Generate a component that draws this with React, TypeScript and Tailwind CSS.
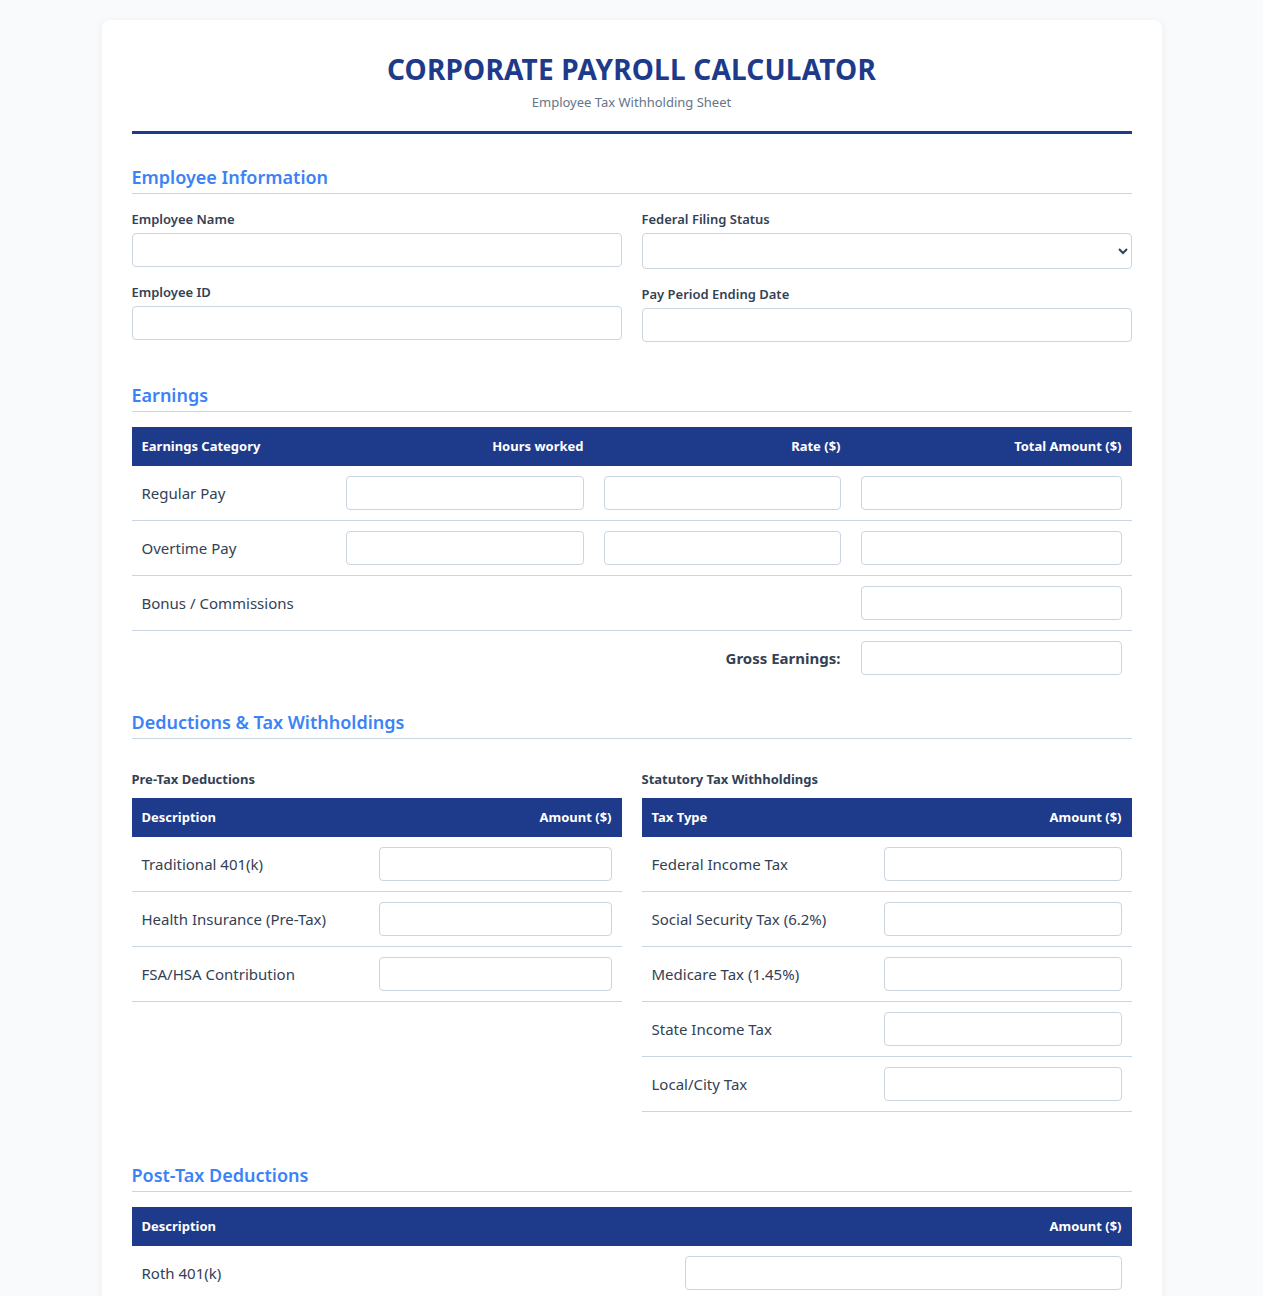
const inputClass =
  "block h-[34px] w-full rounded-[4px] border border-[#cbd5e1] bg-white px-2 text-[14px] text-[#334155] outline-none focus:border-[#3b82f6]";

const labelClass = "block text-[13px] leading-[18px] font-semibold text-[#334155]";

const thClass = "h-[39px] bg-[#1e3a8a] px-[10px] text-[13px] font-bold text-white";

const tdClass = "border-b border-[#cbd5e1] px-[10px] py-[10px] text-[15px] text-[#334155]";

const SectionTitle = ({ title, className }: { title: string; className: string }) => (
  <h2
    className={`border-b border-[#cbd5e1] pb-[5px] text-[18px] leading-[22px] font-semibold text-[#3b82f6] ${className}`}
  >
    {title}
  </h2>
);

const Field = ({ label, tall }: { label: string; tall?: boolean }) => (
  <div className="mb-4">
    <label className={labelClass}>{label}</label>
    {tall ? (
      <select className="mt-[5px] block h-[36px] w-full rounded-[4px] border border-[#cbd5e1] bg-white px-2 text-[14px] text-[#334155]">
        <option value=""></option>
        <option>Single</option>
        <option>Married Filing Jointly</option>
        <option>Head of Household</option>
      </select>
    ) : (
      <input className={`mt-[5px] ${inputClass}`} type="text" />
    )}
  </div>
);

const earnings = [
  { name: "Regular Pay", hours: true },
  { name: "Overtime Pay", hours: true },
  { name: "Bonus / Commissions", hours: false },
];

const preTax = ["Traditional 401(k)", "Health Insurance (Pre-Tax)", "FSA/HSA Contribution"];

const taxes = [
  "Federal Income Tax",
  "Social Security Tax (6.2%)",
  "Medicare Tax (1.45%)",
  "State Income Tax",
  "Local/City Tax",
];

const postTax = ["Roth 401(k)"];

const AmountTable = ({
  first,
  rows,
  descWidth,
  amountWidth,
}: {
  first: string;
  rows: string[];
  descWidth: string;
  amountWidth: string;
}) => (
  <table className="w-full table-fixed border-collapse">
    <colgroup>
      <col className={descWidth} />
      <col className={amountWidth} />
    </colgroup>
    <thead>
      <tr>
        <th className={`${thClass} text-left`}>{first}</th>
        <th className={`${thClass} text-right`}>Amount ($)</th>
      </tr>
    </thead>
    <tbody>
      {rows.map((row) => (
        <tr key={row}>
          <td className={tdClass}>{row}</td>
          <td className={tdClass}>
            <input className={inputClass} type="text" />
          </td>
        </tr>
      ))}
    </tbody>
  </table>
);

export default function App() {
  return (
    <div
      className="min-h-screen bg-[#f8fafc] pt-5 pb-10"
      style={{ fontFamily: '"Noto Sans", "Open Sans", sans-serif' }}
    >
      <div className="mx-auto w-[1060px] rounded-lg bg-white px-[30px] pt-[30px] pb-[40px] shadow-[0_2px_10px_rgba(15,23,42,0.06)]">
        <header className="border-b-[3px] border-[#1e3a8a] pb-5 text-center">
          <h1 className="text-[28px] leading-[38px] font-bold tracking-[0.2px] text-[#1e3a8a] uppercase">
            Corporate Payroll Calculator
          </h1>
          <p className="mt-[5px] text-[13px] leading-[18px] text-[#64748b]">
            Employee Tax Withholding Sheet
          </p>
        </header>

        <SectionTitle title="Employee Information" className="mt-[32px]" />
        <div className="mt-4 grid grid-cols-2 gap-x-5">
          <div>
            <Field label="Employee Name" />
            <Field label="Employee ID" />
          </div>
          <div>
            <Field label="Federal Filing Status" tall />
            <Field label="Pay Period Ending Date" />
          </div>
        </div>

        <SectionTitle title="Earnings" className="mt-[26px]" />
        <table className="mt-[15px] w-full table-fixed border-collapse">
          <colgroup>
            <col className="w-[204px]" />
            <col className="w-[258px]" />
            <col className="w-[257px]" />
            <col className="w-[281px]" />
          </colgroup>
          <thead>
            <tr>
              <th className={`${thClass} text-left`}>Earnings Category</th>
              <th className={`${thClass} text-right`}>Hours worked</th>
              <th className={`${thClass} text-right`}>Rate ($)</th>
              <th className={`${thClass} text-right`}>Total Amount ($)</th>
            </tr>
          </thead>
          <tbody>
            {earnings.map((row) => (
              <tr key={row.name}>
                <td className={tdClass}>{row.name}</td>
                <td className={tdClass}>
                  {row.hours ? <input className={inputClass} type="text" /> : null}
                </td>
                <td className={tdClass}>
                  {row.hours ? <input className={inputClass} type="text" /> : null}
                </td>
                <td className={tdClass}>
                  <input className={inputClass} type="text" />
                </td>
              </tr>
            ))}
            <tr>
              <td
                className="px-[10px] py-[10px] text-right text-[15px] font-bold text-[#334155]"
                colSpan={3}
              >
                Gross Earnings:
              </td>
              <td className="px-[10px] py-[10px]">
                <input className={inputClass} type="text" />
              </td>
            </tr>
          </tbody>
        </table>

        <SectionTitle title="Deductions & Tax Withholdings" className="mt-[26px]" />
        <div className="mt-[31px] grid grid-cols-2 gap-x-5">
          <div>
            <h3 className="text-[13px] leading-[18px] font-bold text-[#334155]">Pre-Tax Deductions</h3>
            <div className="mt-[10px]">
              <AmountTable
                first="Description"
                rows={preTax}
                descWidth="w-[237px]"
                amountWidth="w-[253px]"
              />
            </div>
          </div>
          <div>
            <h3 className="text-[13px] leading-[18px] font-bold text-[#334155]">
              Statutory Tax Withholdings
            </h3>
            <div className="mt-[10px]">
              <AmountTable
                first="Tax Type"
                rows={taxes}
                descWidth="w-[232px]"
                amountWidth="w-[258px]"
              />
            </div>
          </div>
        </div>

        <SectionTitle title="Post-Tax Deductions" className="mt-[52px]" />
        <div className="mt-[15px]">
          <AmountTable
            first="Description"
            rows={postTax}
            descWidth="w-[543px]"
            amountWidth="w-[457px]"
          />
        </div>
      </div>
    </div>
  );
}
